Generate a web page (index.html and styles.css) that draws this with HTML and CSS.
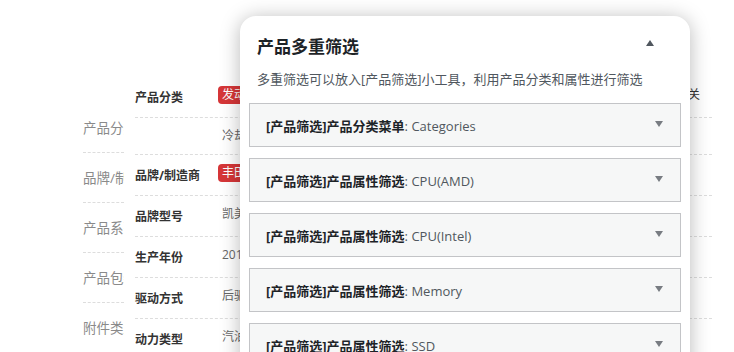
FILE: index.html
```html
<!DOCTYPE html>
<html lang="zh-CN">
<head>
  <meta charset="UTF-8">
  <meta name="viewport" content="width=device-width, initial-scale=1.0">
  <title>产品多重筛选</title>
  <link rel="stylesheet" href="styles.css">
</head>
<body>
  <main class="page">
    <!-- Category tabs on the left -->
    <nav class="cats">
      <div class="cat">产品分类</div>
      <div class="cat">品牌/制造商</div>
      <div class="cat">产品系列</div>
      <div class="cat">产品包装</div>
      <div class="cat">附件类型</div>
    </nav>

    <!-- Product spec table -->
    <section class="specs">
      <div class="spec-row">
        <div class="spec-label">产品分类</div>
        <div class="spec-value"><span class="badge">发动机</span></div>
        <div class="spec-extra">相关</div>
      </div>
      <div class="spec-row spec-row-sub">
        <div class="spec-label"></div>
        <div class="spec-value"><span class="plain">冷却系统</span></div>
      </div>
      <div class="spec-row">
        <div class="spec-label">品牌/制造商</div>
        <div class="spec-value"><span class="badge">丰田</span></div>
      </div>
      <div class="spec-row">
        <div class="spec-label">品牌型号</div>
        <div class="spec-value"><span class="plain">凯美瑞</span></div>
      </div>
      <div class="spec-row">
        <div class="spec-label">生产年份</div>
        <div class="spec-value"><span class="plain">2018</span></div>
      </div>
      <div class="spec-row">
        <div class="spec-label">驱动方式</div>
        <div class="spec-value"><span class="plain">后驱</span></div>
      </div>
      <div class="spec-row">
        <div class="spec-label">动力类型</div>
        <div class="spec-value"><span class="plain">汽油</span></div>
      </div>
    </section>
  </main>

  <!-- Widget popup -->
  <aside class="popup">
    <div class="popup-head">
      <h2>产品多重筛选</h2>
      <span class="caret caret-up"></span>
    </div>
    <p class="popup-desc">多重筛选可以放入[产品筛选]小工具，利用产品分类和属性进行筛选</p>

    <div class="widget">
      <span><b>[产品筛选]产品分类菜单</b>: Categories</span>
      <span class="caret"></span>
    </div>
    <div class="widget">
      <span><b>[产品筛选]产品属性筛选</b>: CPU(AMD)</span>
      <span class="caret"></span>
    </div>
    <div class="widget">
      <span><b>[产品筛选]产品属性筛选</b>: CPU(Intel)</span>
      <span class="caret"></span>
    </div>
    <div class="widget">
      <span><b>[产品筛选]产品属性筛选</b>: Memory</span>
      <span class="caret"></span>
    </div>
    <div class="widget">
      <span><b>[产品筛选]产品属性筛选</b>: SSD</span>
      <span class="caret"></span>
    </div>
  </aside>
</body>
</html>
```

FILE: styles.css
```css
/* Base */
html, body {
  height: 100%;
  overflow: hidden;
}
body {
  margin: 0;
  background: #fff;
  font-family: "Open Sans", "Noto Sans CJK SC", sans-serif;
  color: #333;
}

/* Background page */
.page {
  display: flex;
  align-items: flex-start;
  gap: 11px;
  padding-left: 83px;
  padding-top: 77px;
}
.cats {
  width: 41px;
  overflow: hidden;
  padding-top: 26px;
}
.cat {
  height: 34px;
  padding-top: 15px;
  line-height: 20px;
  font-size: 13.5px;
  color: #8a8a8a;
  white-space: nowrap;
  overflow: hidden;
  border-bottom: 1px dashed #ddd;
}
.specs {
  width: 577px;
}
.spec-row {
  display: flex;
  height: 40px;
  border-bottom: 1px dashed #ddd;
  font-size: 12px;
}
.spec-row-sub {
  height: 36px;
}
.spec-label {
  width: 83px;
  padding-top: 13px;
  line-height: 16px;
  font-weight: bold;
  color: #333;
}
.spec-value {
  padding-top: 9px;
  line-height: 18px;
  color: #666;
  white-space: nowrap;
}
.plain {
  padding-left: 4px;
}
.spec-extra {
  margin-left: auto;
  padding: 9px 12px 0 0;
  line-height: 18px;
  color: #333;
}
.badge {
  display: inline-block;
  padding: 1px 4px;
  line-height: 16px;
  border-radius: 4px;
  background: #d63638;
  color: #fff;
}

/* Popup */
.popup {
  position: absolute;
  left: 240px;
  top: 16px;
  width: 450px;
  height: 420px;
  box-sizing: border-box;
  padding: 19px 9px 0;
  background: #fff;
  border-radius: 16px;
  box-shadow: 0 2px 20px rgba(0, 0, 0, 0.28);
}
.popup-head {
  display: flex;
  justify-content: space-between;
  align-items: flex-start;
  padding: 0 27px 0 8px;
}
.popup-head h2 {
  margin: 0;
  font-size: 17px;
  line-height: 24px;
  font-weight: bold;
  color: #1d2327;
}
.popup-desc {
  margin: 10px 0 14px;
  padding-left: 8px;
  font-size: 13px;
  line-height: 20px;
  color: #50575e;
}
.widget {
  display: flex;
  justify-content: space-between;
  align-items: center;
  height: 42px;
  margin-bottom: 11px;
  padding: 0 17px 0 16px;
  border: 1px solid #c3c4c7;
  background: #f6f7f7;
  font-size: 13px;
  color: #50575e;
}
.widget b {
  color: #1d2327;
}

/* Triangles */
.caret {
  width: 0;
  height: 0;
  border-left: 4px solid transparent;
  border-right: 4px solid transparent;
  border-top: 6px solid #787c82;
  margin-top: -3px;
}
.caret-up {
  border-top: 0;
  border-bottom: 6px solid #50575e;
  margin-top: 5px;
}
```
